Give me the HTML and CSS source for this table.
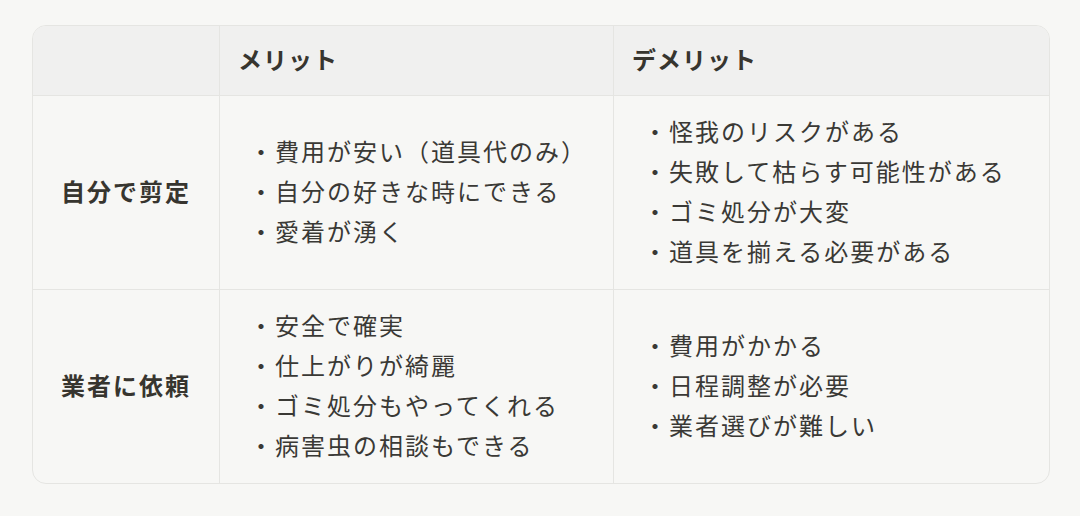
FILE: index.html
```html
<!DOCTYPE html>
<html lang="ja">
<head>
<meta charset="utf-8">
<link rel="stylesheet" href="styles.css">
</head>
<body>
<div class="table">
  <div class="cell head first"></div>
  <div class="cell head">メリット</div>
  <div class="cell head last">デメリット</div>

  <div class="cell label">自分で剪定</div>
  <div class="cell list">
    <div>・費用が安い（道具代のみ）</div>
    <div>・自分の好きな時にできる</div>
    <div>・愛着が湧く</div>
  </div>
  <div class="cell list last">
    <div>・怪我のリスクがある</div>
    <div>・失敗して枯らす可能性がある</div>
    <div>・ゴミ処分が大変</div>
    <div>・道具を揃える必要がある</div>
  </div>

  <div class="cell label bottom">業者に依頼</div>
  <div class="cell list bottom">
    <div>・安全で確実</div>
    <div>・仕上がりが綺麗</div>
    <div>・ゴミ処分もやってくれる</div>
    <div>・病害虫の相談もできる</div>
  </div>
  <div class="cell list bottom last">
    <div>・費用がかかる</div>
    <div>・日程調整が必要</div>
    <div>・業者選びが難しい</div>
  </div>
</div>
</body>
</html>
```

FILE: styles.css
```css
html, body {
  margin: 0;
  background: #f7f7f5;
}
body {
  padding: 25px 0 0 32px;
  font-family: "Noto Sans CJK JP", "Noto Sans", sans-serif;
  color: #37352f;
}
.table {
  width: 1018px;
  box-sizing: border-box;
  border: 1px solid #e5e5e2;
  border-radius: 14px;
  overflow: hidden;
  display: grid;
  grid-template-columns: 187px 394px 1fr;
  grid-template-rows: 70px 194px 193px;
  background: #f7f7f5;
}
.cell {
  border-right: 1px solid #e5e5e2;
  border-bottom: 1px solid #e5e5e2;
  display: flex;
  align-items: center;
  box-sizing: border-box;
  font-size: 24px;
  letter-spacing: 2px;
  line-height: 40px;
  padding-bottom: 4px;
}
.cell.last { border-right: none; }
.cell.bottom { border-bottom: none; }
.head {
  background: #f0f0ef;
  font-weight: 700;
  padding-left: 18px;
  letter-spacing: 1px;
  padding-bottom: 3px;
}
.label {
  justify-content: center;
  font-weight: 700;
}
.list {
  flex-direction: column;
  align-items: flex-start;
  justify-content: center;
  padding-left: 29px;
  color: #3a3935;
}
```
